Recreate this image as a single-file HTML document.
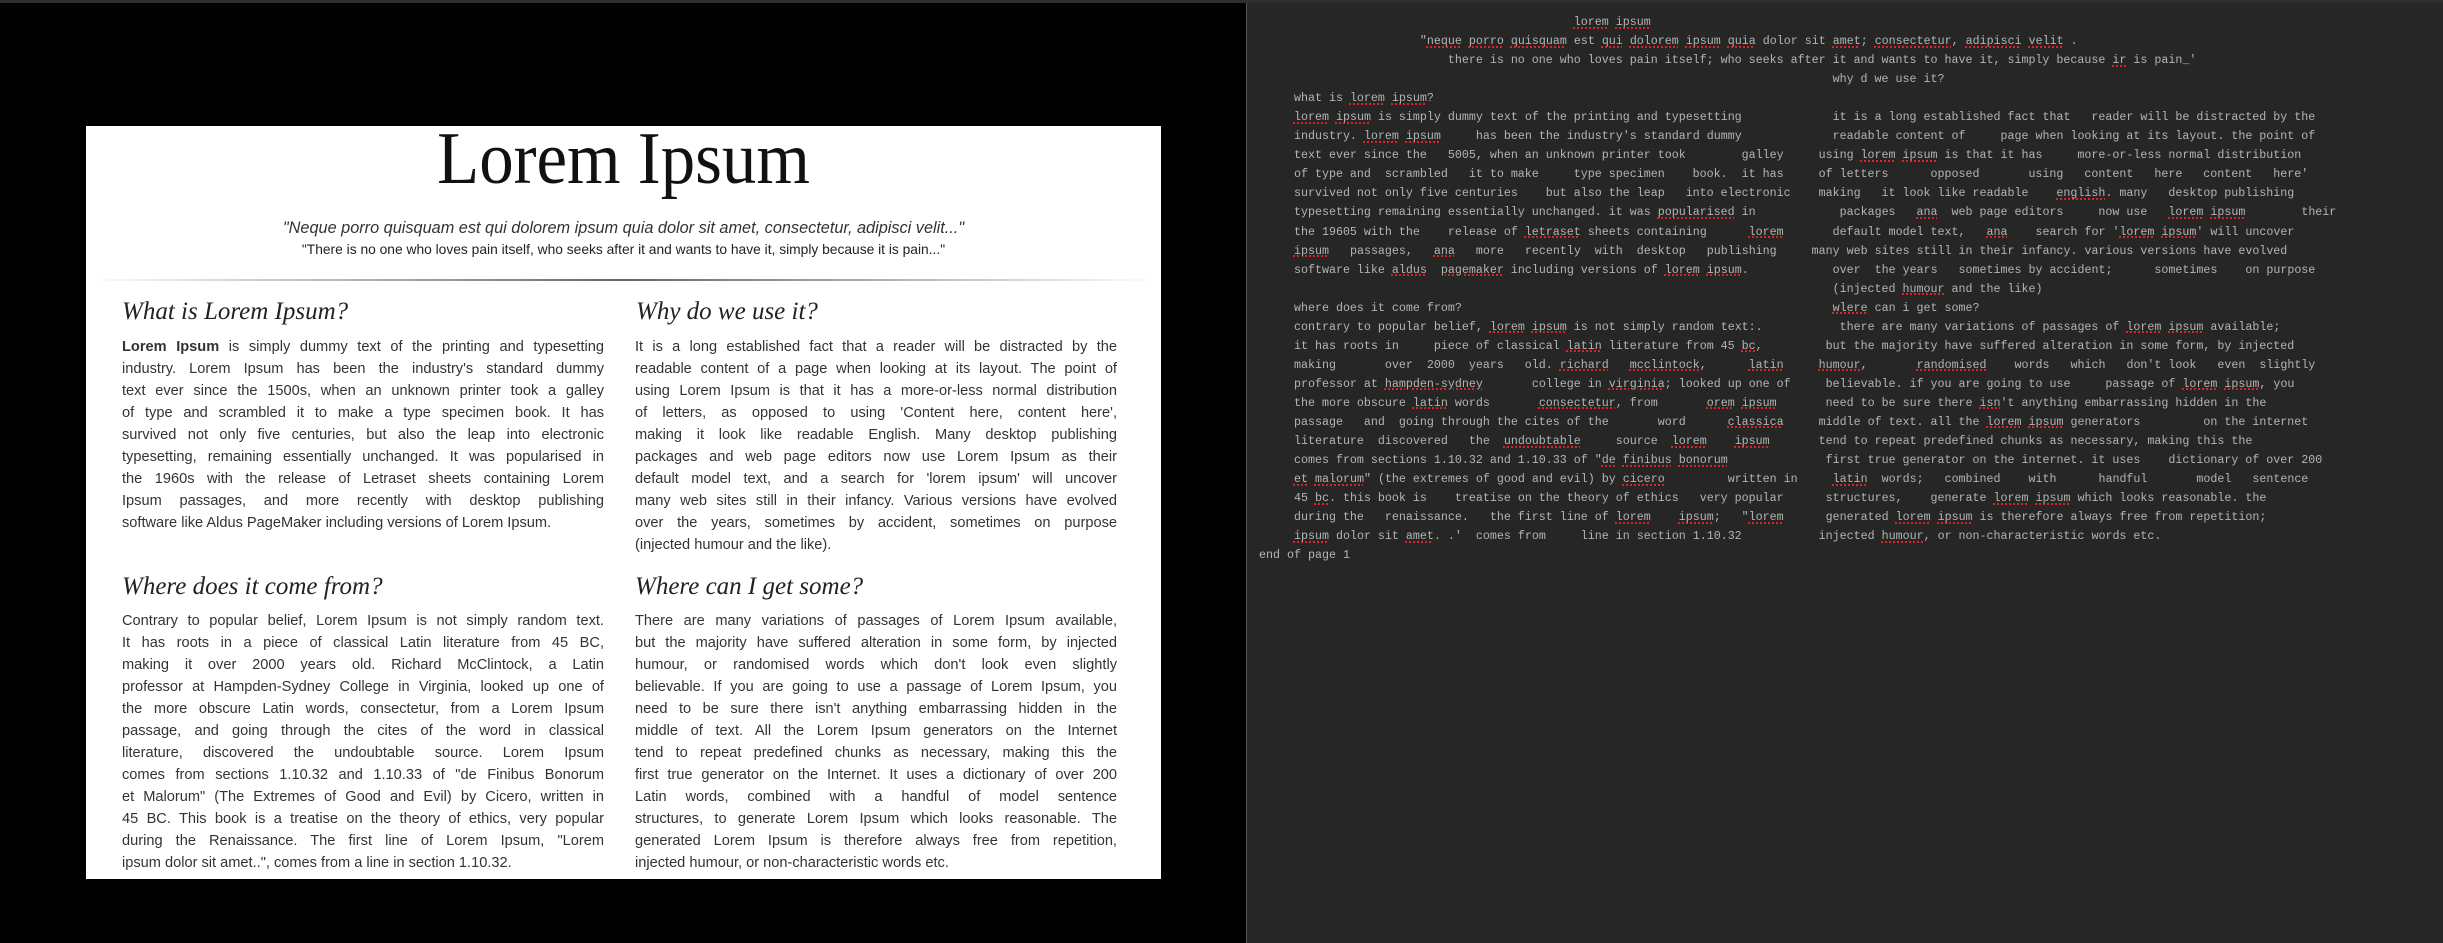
<!DOCTYPE html>
<html><head><meta charset="utf-8"><style>
*{margin:0;padding:0;box-sizing:border-box}
html,body{width:2443px;height:943px;overflow:hidden;background:#000}
#topbar{position:absolute;left:0;top:0;width:2443px;height:3px;background:#2e2e2e}
#right{position:absolute;left:1246px;top:3px;width:1197px;height:940px;background:#262626;border-left:1px solid #555}
#page{position:absolute;left:86px;top:126px;width:1075px;height:753px;background:#fff}
.a{position:absolute;white-space:nowrap}
#title{left:0;width:1075px;text-align:center;font:74px/100px "Liberation Serif",serif;color:#111;top:-17px;transform:scaleX(0.93)}
.q1{left:0;width:1075px;text-align:center;font:italic 16.3px/22px "Liberation Sans",sans-serif;color:#333;top:91px}
.q2{left:0;width:1075px;text-align:center;font:13.8px/22px "Liberation Sans",sans-serif;color:#222;top:113px}
#hr{position:absolute;left:0;top:153px;width:1075px;height:2px;background:linear-gradient(90deg,rgba(0,0,0,0),#666 50%,rgba(0,0,0,0))}
h2{position:absolute;font:italic 25px/30px "Liberation Serif",serif;color:#222;font-weight:normal;white-space:nowrap}
.col{position:absolute;width:482px;font:14.6px/22px "Liberation Sans",sans-serif;color:#333}
.col div{text-align:justify;text-align-last:justify;height:22px;overflow:visible}
.col div.l{text-align-last:left}
pre{position:absolute;left:12px;top:10px;font:11.67px/19.04px "Liberation Mono",monospace;color:#b4b4b4}
.u{text-decoration:underline dotted #d22;text-decoration-thickness:2px;text-underline-offset:2px}
</style></head><body>
<div id="topbar"></div>
<div id="page">
<div id="title" class="a">Lorem Ipsum</div>
<div class="a q1">"Neque porro quisquam est qui dolorem ipsum quia dolor sit amet, consectetur, adipisci velit..."</div>
<div class="a q2">"There is no one who loves pain itself, who seeks after it and wants to have it, simply because it is pain..."</div>
<div id="hr"></div>
<h2 style="left:36px;top:171px">What is Lorem Ipsum?</h2>
<h2 style="left:550px;top:171px">Why do we use it?</h2>
<div class="col" style="left:36px;top:210px">
<div><b>Lorem Ipsum</b> is simply dummy text of the printing and typesetting</div>
<div>industry. Lorem Ipsum has been the industry's standard dummy</div>
<div>text ever since the 1500s, when an unknown printer took a galley</div>
<div>of type and scrambled it to make a type specimen book. It has</div>
<div>survived not only five centuries, but also the leap into electronic</div>
<div>typesetting, remaining essentially unchanged. It was popularised in</div>
<div>the 1960s with the release of Letraset sheets containing Lorem</div>
<div>Ipsum passages, and more recently with desktop publishing</div>
<div class="l">software like Aldus PageMaker including versions of Lorem Ipsum.</div>
</div>
<div class="col" style="left:549px;top:210px">
<div>It is a long established fact that a reader will be distracted by the</div>
<div>readable content of a page when looking at its layout. The point of</div>
<div>using Lorem Ipsum is that it has a more-or-less normal distribution</div>
<div>of letters, as opposed to using 'Content here, content here',</div>
<div>making it look like readable English. Many desktop publishing</div>
<div>packages and web page editors now use Lorem Ipsum as their</div>
<div>default model text, and a search for 'lorem ipsum' will uncover</div>
<div>many web sites still in their infancy. Various versions have evolved</div>
<div>over the years, sometimes by accident, sometimes on purpose</div>
<div class="l">(injected humour and the like).</div>
</div>
<h2 style="left:36px;top:446px">Where does it come from?</h2>
<h2 style="left:549px;top:446px">Where can I get some?</h2>
<div class="col" style="left:36px;top:484px">
<div>Contrary to popular belief, Lorem Ipsum is not simply random text.</div>
<div>It has roots in a piece of classical Latin literature from 45 BC,</div>
<div>making it over 2000 years old. Richard McClintock, a Latin</div>
<div>professor at Hampden-Sydney College in Virginia, looked up one of</div>
<div>the more obscure Latin words, consectetur, from a Lorem Ipsum</div>
<div>passage, and going through the cites of the word in classical</div>
<div>literature, discovered the undoubtable source. Lorem Ipsum</div>
<div>comes from sections 1.10.32 and 1.10.33 of "de Finibus Bonorum</div>
<div>et Malorum" (The Extremes of Good and Evil) by Cicero, written in</div>
<div>45 BC. This book is a treatise on the theory of ethics, very popular</div>
<div>during the Renaissance. The first line of Lorem Ipsum, "Lorem</div>
<div class="l">ipsum dolor sit amet..", comes from a line in section 1.10.32.</div>
</div>
<div class="col" style="left:549px;top:484px">
<div>There are many variations of passages of Lorem Ipsum available,</div>
<div>but the majority have suffered alteration in some form, by injected</div>
<div>humour, or randomised words which don't look even slightly</div>
<div>believable. If you are going to use a passage of Lorem Ipsum, you</div>
<div>need to be sure there isn't anything embarrassing hidden in the</div>
<div>middle of text. All the Lorem Ipsum generators on the Internet</div>
<div>tend to repeat predefined chunks as necessary, making this the</div>
<div>first true generator on the Internet. It uses a dictionary of over 200</div>
<div>Latin words, combined with a handful of model sentence</div>
<div>structures, to generate Lorem Ipsum which looks reasonable. The</div>
<div>generated Lorem Ipsum is therefore always free from repetition,</div>
<div class="l">injected humour, or non-characteristic words etc.</div>
</div>
</div>
<div id="right">
<pre>                                             <span class="u">lorem</span> <span class="u">ipsum</span>
                       "<span class="u">neque</span> <span class="u">porro</span> <span class="u">quisquam</span> est <span class="u">qui</span> <span class="u">dolorem</span> <span class="u">ipsum</span> <span class="u">quia</span> dolor sit <span class="u">amet</span>; <span class="u">consectetur</span>, <span class="u">adipisci</span> <span class="u">velit</span> .
                           there is no one who loves pain itself; who seeks after it and wants to have it, simply because <span class="u">ir</span> is pain_'
                                                                                  why d we use it?
     what is <span class="u">lorem</span> <span class="u">ipsum</span>?
     <span class="u">lorem</span> <span class="u">ipsum</span> is simply dummy text of the printing and typesetting             it is a long established fact that   reader will be distracted by the
     industry. <span class="u">lorem</span> <span class="u">ipsum</span>     has been the industry's standard dummy             readable content of     page when looking at its layout. the point of
     text ever since the   5005, when an unknown printer took        galley     using <span class="u">lorem</span> <span class="u">ipsum</span> is that it has     more-or-less normal distribution
     of type and  scrambled   it to make     type specimen    book.  it has     of letters      opposed       using   content   here   content   here'
     survived not only five centuries    but also the leap   into electronic    making   it look like readable    <span class="u">english</span>. many   desktop publishing
     typesetting remaining essentially unchanged. it was <span class="u">popularised</span> in            packages   <span class="u">ana</span>  web page editors     now use   <span class="u">lorem</span> <span class="u">ipsum</span>        their
     the 19605 with the    release of <span class="u">letraset</span> sheets containing      <span class="u">lorem</span>       default model text,   <span class="u">ana</span>    search for '<span class="u">lorem</span> <span class="u">ipsum</span>' will uncover
     <span class="u">ipsum</span>   passages,   <span class="u">ana</span>   more   recently  with  desktop   publishing     many web sites still in their infancy. various versions have evolved
     software like <span class="u">aldus</span>  <span class="u">pagemaker</span> including versions of <span class="u">lorem</span> <span class="u">ipsum</span>.            over  the years   sometimes by accident;      sometimes    on purpose
                                                                                  (injected <span class="u">humour</span> and the like)
     where does it come from?                                                     <span class="u">wlere</span> can i get some?
     contrary to popular belief, <span class="u">lorem</span> <span class="u">ipsum</span> is not simply random text:.           there are many variations of passages of <span class="u">lorem</span> <span class="u">ipsum</span> available;
     it has roots in     piece of classical <span class="u">latin</span> literature from 45 <span class="u">bc</span>,         but the majority have suffered alteration in some form, by injected
     making       over  2000  years   old. <span class="u">richard</span>   <span class="u">mcclintock</span>,      <span class="u">latin</span>     <span class="u">humour</span>,       <span class="u">randomised</span>    words   which   don't look   even  slightly
     professor at <span class="u">hampden-sydney</span>       college in <span class="u">virginia</span>; looked up one of     believable. if you are going to use     passage of <span class="u">lorem</span> <span class="u">ipsum</span>, you
     the more obscure <span class="u">latin</span> words       <span class="u">consectetur</span>, from       <span class="u">orem</span> <span class="u">ipsum</span>       need to be sure there <span class="u">isn</span>'t anything embarrassing hidden in the
     passage   and  going through the cites of the       word      <span class="u">classica</span>     middle of text. all the <span class="u">lorem</span> <span class="u">ipsum</span> generators         on the internet
     literature  discovered   the  <span class="u">undoubtable</span>     source  <span class="u">lorem</span>    <span class="u">ipsum</span>       tend to repeat predefined chunks as necessary, making this the
     comes from sections 1.10.32 and 1.10.33 of "<span class="u">de</span> <span class="u">finibus</span> <span class="u">bonorum</span>              first true generator on the internet. it uses    dictionary of over 200
     <span class="u">et</span> <span class="u">malorum</span>" (the extremes of good and evil) by <span class="u">cicero</span>         written in     <span class="u">latin</span>  words;   combined    with      handful       model   sentence
     45 <span class="u">bc</span>. this book is    treatise on the theory of ethics   very popular      structures,    generate <span class="u">lorem</span> <span class="u">ipsum</span> which looks reasonable. the
     during the   renaissance.   the first line of <span class="u">lorem</span>    <span class="u">ipsum</span>;   "<span class="u">lorem</span>      generated <span class="u">lorem</span> <span class="u">ipsum</span> is therefore always free from repetition;
     <span class="u">ipsum</span> dolor sit <span class="u">amet</span>. .'  comes from     line in section 1.10.32           injected <span class="u">humour</span>, or non-characteristic words etc.
end of page 1</pre>
</div>
</body></html>
